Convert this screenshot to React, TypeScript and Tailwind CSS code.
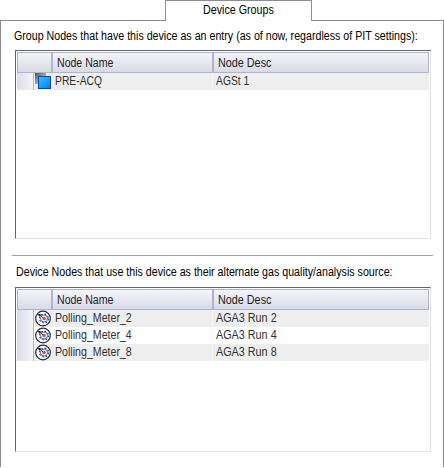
import React from "react";

type Row = { name: string; nameScale: string; desc: string; descScale: string };

function GroupIcon() {
  return (
    <svg width="16" height="16" viewBox="0 0 16 16" className="block">
      <defs>
        <linearGradient id="gray" x1="0" y1="0" x2="1" y2="1">
          <stop offset="0" stopColor="#505050" />
          <stop offset="1" stopColor="#eeeeee" />
        </linearGradient>
        <linearGradient id="blue" x1="0" y1="0" x2="1" y2="1">
          <stop offset="0" stopColor="#3cc4ff" />
          <stop offset="1" stopColor="#0078f8" />
        </linearGradient>
      </defs>
      <rect x="0" y="0" width="11" height="11" fill="url(#gray)" />
      <rect x="3.5" y="3.5" width="12" height="12" fill="url(#blue)" stroke="#0a48b0" />
    </svg>
  );
}

function MeterIcon() {
  return (
    <svg width="16" height="17" viewBox="0 0 16 17" className="block">
      <circle cx="8" cy="8.5" r="7.3" fill="#fff" stroke="#2a2a2a" strokeWidth="1.2" />
      <circle cx="9" cy="8.5" r="4.4" fill="none" stroke="#1740a8" strokeWidth="1.3" strokeDasharray="1.7 1.75" />
      <circle cx="9" cy="8.5" r="3.5" fill="#fff" stroke="#2f58b8" strokeWidth="0.9" />
      <circle cx="9.1" cy="8.5" r="1.8" fill="#ff4420" />
      <path d="M4 4L8 8" stroke="#222" strokeWidth="0.8" />
      <path d="M2.6 4L6.2 4.3L4.3 6.6Z" fill="#111" />
    </svg>
  );
}

function Label({ children, scale }: { children: string; scale: string }) {
  return <span className={`inline-block origin-left ${scale}`}>{children}</span>;
}

function NodeTable({ rows, icon, height }: { rows: Row[]; icon: React.ReactNode; height: string }) {
  return (
    <div className={`ml-[14px] w-[416px] border border-t-[#646464] border-l-[#646464] border-r-[#e3e0e3] border-b-[#e3e3e3] p-px ${height}`}>
      <div className="flex h-[21px] w-[412px] border border-[#aab4d3] bg-linear-to-b from-[#f5f4f9] to-[#d9dae5] text-[#202020]">
        <div className="w-[33px]" />
        <div className="w-[161px] border-l-2 border-[#aab4d3] pl-1 leading-[20px]"><Label scale="scale-x-[0.88]">Node Name</Label></div>
        <div className="flex-1 border-l-2 border-[#aab4d3] pl-1 leading-[20px]"><Label scale="scale-x-[0.9]">Node Desc</Label></div>
      </div>
      {rows.map((r, i) => (
        <div key={r.name} className={`flex h-[17px] w-[412px] text-[#303030] ${i % 2 ? "bg-white" : "bg-[#eeeeee]"}`}>
          <div className="w-[17px] border-r border-[#aab4d3] bg-linear-to-r from-[#dcdde8] to-[#f5f4f9]" />
          <div className="w-[18px] pl-px">{icon}</div>
          <div className="w-[161px] border-r border-[#f6f6f6] pl-[3px] leading-[17px]"><Label scale={r.nameScale}>{r.name}</Label></div>
          <div className="flex-1 pl-[3px] leading-[17px]"><Label scale={r.descScale}>{r.desc}</Label></div>
        </div>
      ))}
    </div>
  );
}

export default function App() {
  return (
    <div className="h-[468px] w-[444px] overflow-hidden bg-white font-['Liberation_Sans',Arial,sans-serif] text-[12px] whitespace-nowrap text-black">
      <div className="flex h-[21px]">
        <div className="w-[165px] border-b border-[#8c8c94]" />
        <div className="w-[147px] border-x border-t border-[#8c8c94] pl-[37px] leading-[18px]"><Label scale="scale-x-[0.892]">Device Groups</Label></div>
        <div className="flex-1 border-b border-[#8c8c94]" />
      </div>
      <div className="h-[446px] border-x border-[#8c8c94]">
        <div className="h-[29px] pl-[13px] leading-[30px]">
          <Label scale="scale-x-[0.888]">Group Nodes that have this device as an entry (as of now, regardless of PIT settings):</Label>
        </div>
        <NodeTable
          rows={[{ name: "PRE-ACQ", nameScale: "scale-x-[0.86]", desc: "AGSt 1", descScale: "scale-x-[0.86]" }]}
          icon={<GroupIcon />}
          height="h-[189px]"
        />
        <div className="ml-[11px] h-[17px] w-[421px] border-b border-[#a0a0a0]" />
        <div className="h-[31px] pl-[15px] leading-[32px]">
          <Label scale="scale-x-[0.889]">Device Nodes that use this device as their alternate gas quality/analysis source:</Label>
        </div>
        <NodeTable
          rows={[
            { name: "Polling_Meter_2", nameScale: "scale-x-[0.885]", desc: "AGA3 Run 2", descScale: "scale-x-[0.9]" },
            { name: "Polling_Meter_4", nameScale: "scale-x-[0.885]", desc: "AGA3 Run 4", descScale: "scale-x-[0.9]" },
            { name: "Polling_Meter_8", nameScale: "scale-x-[0.885]", desc: "AGA3 Run 8", descScale: "scale-x-[0.9]" },
          ]}
          icon={<MeterIcon />}
          height="h-[165px]"
        />
      </div>
    </div>
  );
}
